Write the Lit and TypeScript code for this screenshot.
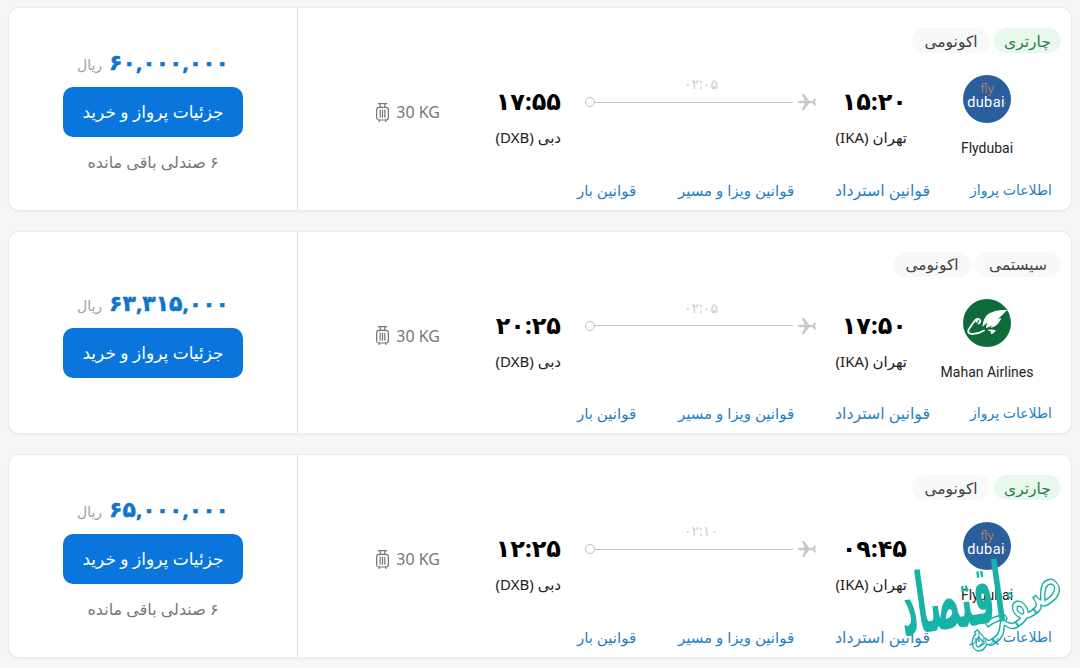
import { LitElement, html, css, svg } from "lit";
import { customElement } from "lit/decorators.js";

type Flight = {
  tag: string; tagWidth: number; green: boolean; logo: "fly" | "mahan"; name: string;
  dep: string; arr: string; dur: string; price: string; seats: boolean;
};

const flights: Flight[] = [
  { tag: "چارتری", tagWidth: 67, green: true, logo: "fly", name: "Flydubai", dep: "۱۵:۲۰", arr: "۱۷:۵۵", dur: "۰۲:۰۵", price: "۶۰,۰۰۰,۰۰۰", seats: true },
  { tag: "سیستمی", tagWidth: 86, green: false, logo: "mahan", name: "Mahan Airlines", dep: "۱۷:۵۰", arr: "۲۰:۲۵", dur: "۰۲:۰۵", price: "۶۳,۳۱۵,۰۰۰", seats: false },
  { tag: "چارتری", tagWidth: 67, green: true, logo: "fly", name: "Flydubai", dep: "۰۹:۴۵", arr: "۱۲:۲۵", dur: "۰۲:۱۰", price: "۶۵,۰۰۰,۰۰۰", seats: true },
];

const flyLogo = svg`<svg class="logo" viewBox="0 0 48 48" aria-hidden="true">
  <circle cx="24" cy="24" r="24" fill="#2a5f9e"></circle>
  <text x="24" y="18" text-anchor="middle" font-size="13" fill="#d9844a" font-family="Roboto, sans-serif" font-weight="300">fly</text>
  <text x="23" y="32" text-anchor="middle" font-size="14.500" fill="#fff" font-family="Roboto, sans-serif" font-weight="400" letter-spacing=".4">dubai</text>
  <circle cx="42.500" cy="28" r=".7" fill="#e8843c"></circle>
</svg>`;

const mahanLogo = svg`<svg class="logo" viewBox="0 0 48 48" aria-hidden="true">
  <circle cx="24" cy="24" r="24" fill="#0f6b3a"></circle>
  <path d="M44 11c-6-.5-13 .5-18 3.500-3.500 2.200-6 6.500-6.500 13.500 1.500-1.800 3-3.200 5-4.500-1 2-1.500 3.800-1.500 5.500 2-.5 4-1.200 6-2.500-.5 1-1 1.500-1.800 2.300 3.500-.3 6.300-2 8.500-5 1.200-1.700 1.800-3 2.800-4.800-1.200.4-2.400.7-3.500.8 3-2.400 6-5.300 9-8.800Z" fill="#fff"></path>
  <path d="M24 31c3-.8 6-.8 9 .5-1.500 2-3.200 3.300-5 3.500-.3-1-.3-1.700 0-2.500-1.200-.6-2.500-1.100-4-1.500Z" fill="#fff"></path>
  <path d="M15.500 24.500c1.800-.6 2.500-2.800 1-4-1.400-1-3.600-.4-5 1.500-2.500 3.500-5 7-6 9-.7 1.800 0 3.300 2 3.700 4 .6 10-1 13.500-3.200" fill="none" stroke="#fff" stroke-width="1.800" stroke-linecap="round"></path>
  <path d="M12.500 21.500c1-.6 2.500-.6 3 .5-.5 1.300-1.800 1.700-3 1.500Z" fill="#fff"></path>
</svg>`;

const plane = svg`<svg class="plane" viewBox="0 0 24 24" aria-hidden="true">
  <path d="M1 12c0-.9 1.500-1.500 3-1.500h5.300L5.800 2.500h2.700l6 8h4.500l2-2.800H23l-1.300 4.300L23 16.300h-2l-2-2.800h-4.500l-6 8H5.800l3.500-8H4c-1.500 0-3-.6-3-1.500Z" fill="#c8c8c8"></path>
</svg>`;

const bag = svg`<svg class="bag" viewBox="0 0 16 22" aria-hidden="true">
  <g fill="none" stroke="#757575" stroke-width="1.300" stroke-linecap="round" stroke-linejoin="round">
    <rect x="1.700" y="5.500" width="12.600" height="13.500" rx="3"></rect>
    <path d="M5.500 5.500V1.500h5v4M3.500 1.500h9M5.500 8.500v7.500M8 8.500v7.500M10.500 8.500v7.500M4.500 19v1.500M11.500 19v1.500"></path>
  </g>
</svg>`;

@customElement("app-root")
export class AppRoot extends LitElement {
  static styles = css`
    :host {
      display: block;
      position: relative;
      width: 1080px;
      height: 668px;
      overflow: hidden;
      background: #f6f6f6;
      font-family: "Noto Sans", "DejaVu Sans", sans-serif;
      direction: rtl;
    }
    .list {
      display: flex;
      flex-direction: column;
      gap: 22px;
      padding: 8px 9px 0;
    }
    .card {
      display: flex;
      height: 201.5px;
      box-sizing: border-box;
      background: #fff;
      border-radius: 10px;
      box-shadow: 0 0 0 1px #ececec, 0 1px 3px rgba(0, 0, 0, 0.1);
    }
    .main {
      flex: 1;
      display: flex;
      flex-direction: column;
      padding: 20px 0 10px;
      min-width: 0;
    }
    .tags {
      display: flex;
      gap: 4px;
      padding-right: 10px;
      height: 25px;
    }
    .chip {
      display: flex;
      align-items: center;
      justify-content: center;
      width: 78px;
      height: 25px;
      border-radius: 13px;
      background: #f8f8f8;
      color: #444;
      font-size: 15.500px;
    }
    .chip.green {
      background: #e8f8ec;
      color: #2e7d4f;
    }
    .row {
      display: flex;
      margin-top: 22px;
      padding-right: 34px;
      height: 85px;
    }
    .airline {
      width: 100px;
      display: flex;
      flex-direction: column;
      align-items: center;
    }
    .logo {
      width: 48px;
      height: 48px;
      display: block;
    }
    .name {
      margin-top: 15px;
      font-family: "Roboto", sans-serif;
      font-size: 14px;
      line-height: 20px;
      color: #222;
      direction: ltr;
      white-space: nowrap;
    }
    .point {
      width: 70px;
      margin-right: 30px;
      white-space: nowrap;
    }
    .point.end {
      margin-right: 24px;
    }
    .time {
      font-size: 24px;
      font-weight: 700;
      line-height: 30px;
      margin-top: 11px;
      color: #000;
    }
    .city {
      margin-top: 11px;
      font-size: 15px;
      line-height: 20px;
      color: #222;
    }
    .route {
      width: 232px;
      margin-right: 20px;
      display: flex;
      flex-direction: column;
      align-items: center;
    }
    .dur {
      font-size: 14px;
      line-height: 17px;
      color: #cfcfcf;
    }
    .track {
      width: 100%;
      display: flex;
      align-items: center;
      height: 20px;
    }
    .plane {
      width: 20px;
      height: 20px;
      flex: none;
      margin-left: 4px;
    }
    .line {
      flex: 1;
      height: 1px;
      background: #c4c4c4;
    }
    .dot {
      flex: none;
      box-sizing: border-box;
      width: 10px;
      height: 10px;
      border: 1px solid #bdbdbd;
      border-radius: 50%;
      background: #fff;
    }
    .baggage {
      display: flex;
      align-items: center;
      gap: 6px;
      height: 20px;
      margin-top: 27px;
      margin-right: 51px;
      color: #777;
      font-size: 16px;
      white-space: nowrap;
    }
    .bag {
      width: 15px;
      height: 21px;
      flex: none;
    }
    .kg {
      direction: ltr;
    }
    .links {
      margin-top: auto;
      display: grid;
      grid-template-columns: 82px 95px 118px 61px;
      justify-content: start;
      gap: 40px;
      padding-right: 19px;
      font-size: 15px;
      line-height: 20px;
      color: #1f7fc4;
      white-space: nowrap;
    }
    .links span {
      display: flex;
      justify-content: center;
    }
    .links span:nth-child(1) {
      font-size: 14px;
    }
    .links span:nth-child(2) {
      font-size: 15.800px;
    }
    .buy {
      flex: none;
      width: 289px;
      box-sizing: border-box;
      border-right: 1px solid #dcdcdc;
      padding-top: 3px;
      display: flex;
      flex-direction: column;
      align-items: center;
      justify-content: center;
    }
    .price {
      display: flex;
      align-items: baseline;
      gap: 7px;
      height: 24px;
      line-height: 24px;
    }
    .amount {
      font-size: 22px;
      font-weight: 700;
      color: #0f75cc;
      -webkit-text-stroke: 0.500px #0f75cc;
    }
    .rial {
      font-size: 14px;
      color: #a0a0a0;
    }
    .btn {
      margin-top: 14px;
      width: 180px;
      height: 50px;
      display: flex;
      align-items: center;
      justify-content: center;
      border-radius: 10px;
      background: #0a76dc;
      color: #fff;
      font-size: 17px;
    }
    .seats {
      margin-top: 15px;
      font-size: 16px;
      line-height: 20px;
      color: #777;
    }
    .mark {
      position: absolute;
      left: 900px;
      top: 540px;
      width: 170px;
      height: 120px;
      color: #17b3a6;
      pointer-events: none;
    }
    .mark span {
      position: absolute;
      display: block;
      text-align: center;
      white-space: nowrap;
    }
    .mark .thin {
      left: 56px;
      top: 40px;
      width: 108px;
      height: 50px;
      line-height: 50px;
      font-size: 44px;
      color: rgba(255, 255, 255, 0.35);
      -webkit-text-stroke: 1.200px #17b3a6;
      transform: rotate(-36deg) scaleY(1.300);
    }
    .mark .big {
      left: 0;
      top: 32px;
      width: 104px;
      height: 50px;
      line-height: 50px;
      font-size: 32px;
      font-weight: 700;
      transform: rotate(-8deg) scaleY(2.600);
    }
  `;

  render() {
    return html`
      <div class="list">
        ${flights.map(
          (f) => html`
            <div class="card">
              <div class="main">
                <div class="tags">
                  <span class="chip ${f.green ? "green" : ""}" style="width:${f.tagWidth}px">${f.tag}</span>
                  <span class="chip">اکونومی</span>
                </div>
                <div class="row">
                  <div class="airline">
                    ${f.logo === "fly" ? flyLogo : mahanLogo}
                    <div class="name">${f.name}</div>
                  </div>
                  <div class="point">
                    <div class="time">${f.dep}</div>
                    <div class="city">تهران (IKA)</div>
                  </div>
                  <div class="route">
                    <div class="dur">${f.dur}</div>
                    <div class="track">
                      ${plane}
                      <div class="line"></div>
                      <div class="dot"></div>
                    </div>
                  </div>
                  <div class="point end">
                    <div class="time">${f.arr}</div>
                    <div class="city">دبی (DXB)</div>
                  </div>
                  <div class="baggage">
                    <span class="kg">30 KG</span>
                    ${bag}
                  </div>
                </div>
                <div class="links">
                  <span>اطلاعات پرواز</span>
                  <span>قوانین استرداد</span>
                  <span>قوانین ویزا و مسیر</span>
                  <span>قوانین بار</span>
                </div>
              </div>
              <div class="buy">
                <div class="price">
                  <span class="amount">${f.price}</span>
                  <span class="rial">ریال</span>
                </div>
                <div class="btn">جزئیات پرواز و خرید</div>
                ${f.seats ? html`<div class="seats">۶ صندلی باقی مانده</div>` : ""}
              </div>
            </div>
          `
        )}
      </div>
      <div class="mark">
        <span class="thin">صفحه</span>
        <span class="big">اقتصاد</span>
      </div>
    `;
  }
}
